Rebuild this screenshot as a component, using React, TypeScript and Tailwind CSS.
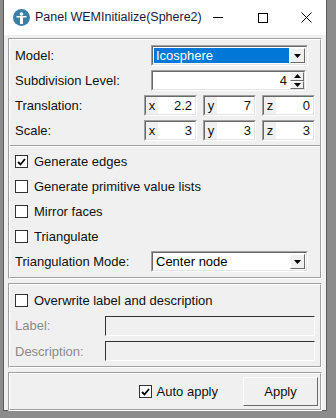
import React from 'react';

const font = { fontFamily: '"Liberation Sans", Arial, sans-serif' };

function Sunken({ className = '', children }: { className?: string; children?: React.ReactNode }) {
  return (
    <div
      className={`border border-t-[#a0a0a0] border-l-[#a0a0a0] border-b-white border-r-white ${className}`}
    >
      <div className="h-full w-full border border-t-[#696969] border-l-[#696969] border-b-[#e3e3e3] border-r-[#e3e3e3] bg-white">
        {children}
      </div>
    </div>
  );
}

function Arrow({ up }: { up?: boolean }) {
  return (
    <svg width="7" height="4" viewBox="0 0 7 4">
      <polygon points={up ? '0,4 7,4 3.5,0' : '0,0 7,0 3.5,4'} fill="#000" />
    </svg>
  );
}

function Combo({ value, selected }: { value: string; selected?: boolean }) {
  return (
    <Sunken className="h-[21px] w-[157px]">
      <div className="flex h-full items-stretch p-px">
        <div
          className={`flex flex-1 items-center pl-[2px] text-[13px] ${selected ? 'bg-[#0078d7] text-white' : 'text-black'}`}
        >
          {value}
        </div>
        <div className="ml-px flex w-[15px] items-center justify-center border border-t-white border-l-white border-b-[#696969] border-r-[#696969] bg-[#f0f0f0]">
          <Arrow />
        </div>
      </div>
    </Sunken>
  );
}

function VecField({ axis, value }: { axis: string; value: string }) {
  return (
    <Sunken className="h-[21px] w-[53px]">
      <div className="flex h-full items-center text-[13px]">
        <span className="flex h-full w-[12px] items-center justify-center bg-[#f0f0f0]">{axis}</span>
        <span className="flex-1 pr-[3px] text-right">{value}</span>
      </div>
    </Sunken>
  );
}

function Check({ checked }: { checked?: boolean }) {
  return (
    <div className="flex h-[13px] w-[13px] items-center justify-center border border-[#333] bg-white">
      {checked && (
        <svg width="9" height="8" viewBox="0 0 9 8">
          <path d="M1 4 L3.5 6.5 L8 1" stroke="#000" strokeWidth="1.8" fill="none" />
        </svg>
      )}
    </div>
  );
}

function CheckRow({ label, checked }: { label: string; checked?: boolean }) {
  return (
    <div className="flex h-[25px] items-center gap-[6px]">
      <Check checked={checked} />
      <span className="text-[13px]">{label}</span>
    </div>
  );
}

function Group({ className = '', children }: { className?: string; children: React.ReactNode }) {
  return (
    <div className={`border border-t-[#a0a0a0] border-l-[#a0a0a0] border-b-white border-r-white ${className}`}>
      <div className="border border-t-white border-l-white border-b-[#a0a0a0] border-r-[#a0a0a0]">{children}</div>
    </div>
  );
}

function LabelRow({ label, children }: { label: string; children: React.ReactNode }) {
  return (
    <div className="flex h-[25px] items-center">
      <span className="w-[136px] text-[13px]">{label}</span>
      {children}
    </div>
  );
}

function DisabledField({ label }: { label: string }) {
  return (
    <div className="flex h-[25.5px] items-center">
      <span className="w-[90px] text-[13px] text-[#8a8a8a]">{label}</span>
      <div className="h-[20px] flex-1 border border-t-[#333] border-l-[#333] border-b-white border-r-white bg-[#f0f0f0]" />
    </div>
  );
}

export default function App() {
  return (
    <div className="h-[418px] w-[336px] overflow-hidden bg-[#8c8c8c] pl-[3px]" style={font}>
      <div className="flex h-[411px] w-[324px] flex-col border border-t-0 border-[#5a5a5a] bg-[#f0f0f0] text-[#111]">
        {/* title bar */}
        <div className="flex h-[35px] shrink-0 items-center bg-white">
          <div className="ml-[9px] flex h-[17px] w-[17px] shrink-0 items-center justify-center rounded-full bg-[#3a7fa8]">
            <svg width="11" height="12" viewBox="0 0 11 12">
              <circle cx="5.5" cy="2" r="1.8" fill="#fff" />
              <path d="M0.5 4 H10.5 V5.5 H7 V12 H4 V5.5 H0.5 Z" fill="#fff" />
            </svg>
          </div>
          <span className="ml-[5px] min-w-0 flex-1 whitespace-nowrap text-[12.5px] text-[#1a1a40]">
            Panel WEMInitialize(Sphere2)
          </span>
          <div className="flex h-full shrink-0 items-center">
            <div className="flex w-[44px] justify-center">
              <div className="h-px w-[10px] bg-black" />
            </div>
            <div className="flex w-[46px] justify-center">
              <div className="h-[10px] w-[10px] border border-black" />
            </div>
            <div className="flex w-[40px] justify-center">
              <svg width="11" height="11" viewBox="0 0 11 11">
                <path d="M0.5 0.5 L10.5 10.5 M10.5 0.5 L0.5 10.5" stroke="#000" strokeWidth="1" />
              </svg>
            </div>
          </div>
        </div>

        <div className="flex flex-1 flex-col px-[4px] pt-[3px]">
          <Group>
            <div className="px-[5px] pt-[3px] pb-[2px]">
              <LabelRow label="Model:">
                <Combo value="Icosphere" selected />
              </LabelRow>
              <LabelRow label="Subdivision Level:">
                <Sunken className="h-[21px] w-[155px]">
                  <div className="flex h-full items-center">
                    <span className="flex-1 pr-[3px] text-right text-[13px]">4</span>
                    <div className="flex h-full w-[14px] flex-col bg-[#f0f0f0]">
                      <div className="flex flex-1 items-center justify-center border border-t-white border-l-white border-b-[#696969] border-r-[#696969]">
                        <Arrow up />
                      </div>
                      <div className="flex flex-1 items-center justify-center border border-t-white border-l-white border-b-[#696969] border-r-[#696969]">
                        <Arrow />
                      </div>
                    </div>
                  </div>
                </Sunken>
              </LabelRow>
              <LabelRow label="Translation:">
                <div className="flex gap-[6px]">
                  <VecField axis="x" value="2.2" />
                  <VecField axis="y" value="7" />
                  <VecField axis="z" value="0" />
                </div>
              </LabelRow>
              <LabelRow label="Scale:">
                <div className="flex gap-[6px]">
                  <VecField axis="x" value="3" />
                  <VecField axis="y" value="3" />
                  <VecField axis="z" value="3" />
                </div>
              </LabelRow>
            </div>
            <div className="border-t border-b border-t-[#a0a0a0] border-b-white" />
            <div className="px-[5px] pt-[2px] pb-[3px]">
              <CheckRow label="Generate edges" checked />
              <CheckRow label="Generate primitive value lists" />
              <CheckRow label="Mirror faces" />
              <CheckRow label="Triangulate" />
              <LabelRow label="Triangulation Mode:">
                <Combo value="Center node" />
              </LabelRow>
            </div>
          </Group>

          <Group className="mt-[4px]">
            <div className="px-[5px] pt-[3px] pb-[2px]">
              <CheckRow label="Overwrite label and description" />
              <DisabledField label="Label:" />
              <DisabledField label="Description:" />
            </div>
          </Group>

          <Group className="mt-[4px]">
            <div className="flex h-[35px] items-center justify-end pr-[2px]">
              <div className="flex items-center gap-[5px]">
                <Check checked />
                <span className="text-[13px]">Auto apply</span>
              </div>
              <div className="ml-[25px] flex h-[29px] w-[75px] items-center justify-center border border-t-white border-l-white border-b-[#696969] border-r-[#696969] bg-[#f0f0f0] text-[13px]">
                Apply
              </div>
            </div>
          </Group>
        </div>
      </div>
    </div>
  );
}
